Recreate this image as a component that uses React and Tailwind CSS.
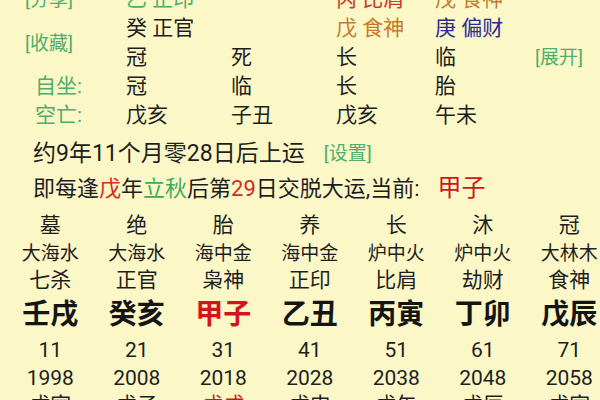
import React from "react";

const font = { fontFamily: "Roboto, 'Noto Sans CJK SC', 'Noto Sans', sans-serif" };

const cols = [
  { st: "墓", ny: "大海水", ss: "七杀", gz: "壬戌", age: "11", yr: "1998", ln: "戊寅" },
  { st: "绝", ny: "大海水", ss: "正官", gz: "癸亥", age: "21", yr: "2008", ln: "戊子" },
  { st: "胎", ny: "海中金", ss: "枭神", gz: "甲子", age: "31", yr: "2018", ln: "戊戌", red: true },
  { st: "养", ny: "海中金", ss: "正印", gz: "乙丑", age: "41", yr: "2028", ln: "戊申" },
  { st: "长", ny: "炉中火", ss: "比肩", gz: "丙寅", age: "51", yr: "2038", ln: "戊午" },
  { st: "沐", ny: "炉中火", ss: "劫财", gz: "丁卯", age: "61", yr: "2048", ln: "戊辰" },
  { st: "冠", ny: "大林木", ss: "食神", gz: "戊辰", age: "71", yr: "2058", ln: "戊寅" },
];

export default function App() {
  return (
    <div
      className="w-[600px] h-[400px] overflow-hidden bg-[#fbf7c7] text-[#1e1e1e]"
      style={font}
    >
      {/* top table */}
      <div className="mt-[-15px] grid grid-cols-[126px_105px_105px_99px_auto] text-[21px] leading-[29px]">
        {/* row 0 */}
        <div className="h-[29px] pl-[25px] text-[19px] text-[#4fae6c]">[分享]</div>
        <div className="h-[29px] text-[#4fae6c]">乙 正印</div>
        <div className="h-[29px]"></div>
        <div className="h-[29px] text-[#c8392b]">丙 比肩</div>
        <div className="h-[29px] text-[#c57b2c]">戊 食神</div>
        {/* row 1 */}
        <div className="row-span-2 flex items-center pl-[25px] text-[19px] text-[#4fae6c]">[收藏]</div>
        <div className="h-[29px]">癸 正官</div>
        <div className="h-[29px]"></div>
        <div className="h-[29px] text-[#c57b2c]">戊 食神</div>
        <div className="h-[29px] text-[#2b2c93]">庚 偏财</div>
        {/* row 2 */}
        <div className="h-[29px]">冠</div>
        <div className="h-[29px]">死</div>
        <div className="h-[29px]">长</div>
        <div className="h-[29px] relative">
          临
          <span className="absolute left-[100px] top-0 text-[19px] whitespace-nowrap text-[#4fae6c]">[展开]</span>
        </div>
        {/* row 3 */}
        <div className="h-[29px] pl-[35px] text-[#4fae6c]">自坐:</div>
        <div className="h-[29px]">冠</div>
        <div className="h-[29px]">临</div>
        <div className="h-[29px]">长</div>
        <div className="h-[29px]">胎</div>
        {/* row 4 */}
        <div className="h-[29px] pl-[35px] text-[#4fae6c]">空亡:</div>
        <div className="h-[29px]">戊亥</div>
        <div className="h-[29px]">子丑</div>
        <div className="h-[29px]">戊亥</div>
        <div className="h-[29px]">午未</div>
      </div>

      {/* text lines */}
      <div className="mt-[6px] pl-[33px]">
        <div className="h-[35px] leading-[35px] flex items-center whitespace-nowrap text-[23px]">
          <span>约9年11个月零28日后上运</span>
          <span className="ml-[19px] text-[19px] text-[#4fae6c]">[设置]</span>
        </div>
        <div className="h-[35px] leading-[35px] flex items-center whitespace-nowrap text-[22px]">
          <span>即每逢</span>
          <span className="text-[#d42a22]">戊</span>
          <span>年</span>
          <span className="text-[#3faa5e]">立秋</span>
          <span>后第</span>
          <span className="text-[#d42a22]">29</span>
          <span>日交脱大运,当前:</span>
          <span className="ml-[18px] text-[24px] text-[#d0161a]">甲子</span>
        </div>
      </div>

      {/* dayun grid */}
      <div className="mt-[4px] pl-[7px] grid grid-cols-[repeat(7,86.5px)] text-center">
        {cols.map((c, i) => (
          <div key={i} className="flex flex-col items-center">
            <div className="h-[30px] leading-[30px] text-[21px]">{c.st}</div>
            <div className="h-[27px] leading-[27px] text-[19px]">{c.ny}</div>
            <div className="h-[27px] leading-[27px] text-[21px]">{c.ss}</div>
            <div
              className={
                "h-[42px] leading-[42px] text-[28px] font-bold whitespace-nowrap " +
                (c.red ? "text-[#d4141a]" : "text-[#151515]")
              }
            >
              {c.gz}
            </div>
            <div className="h-[28px] leading-[28px] text-[21px]">{c.age}</div>
            <div className="h-[28px] leading-[28px] text-[21px]">{c.yr}</div>
            <div
              className={
                "h-[26px] leading-[26px] text-[21px] " + (c.red ? "text-[#d4141a]" : "")
              }
            >
              {c.ln}
            </div>
          </div>
        ))}
      </div>
    </div>
  );
}
